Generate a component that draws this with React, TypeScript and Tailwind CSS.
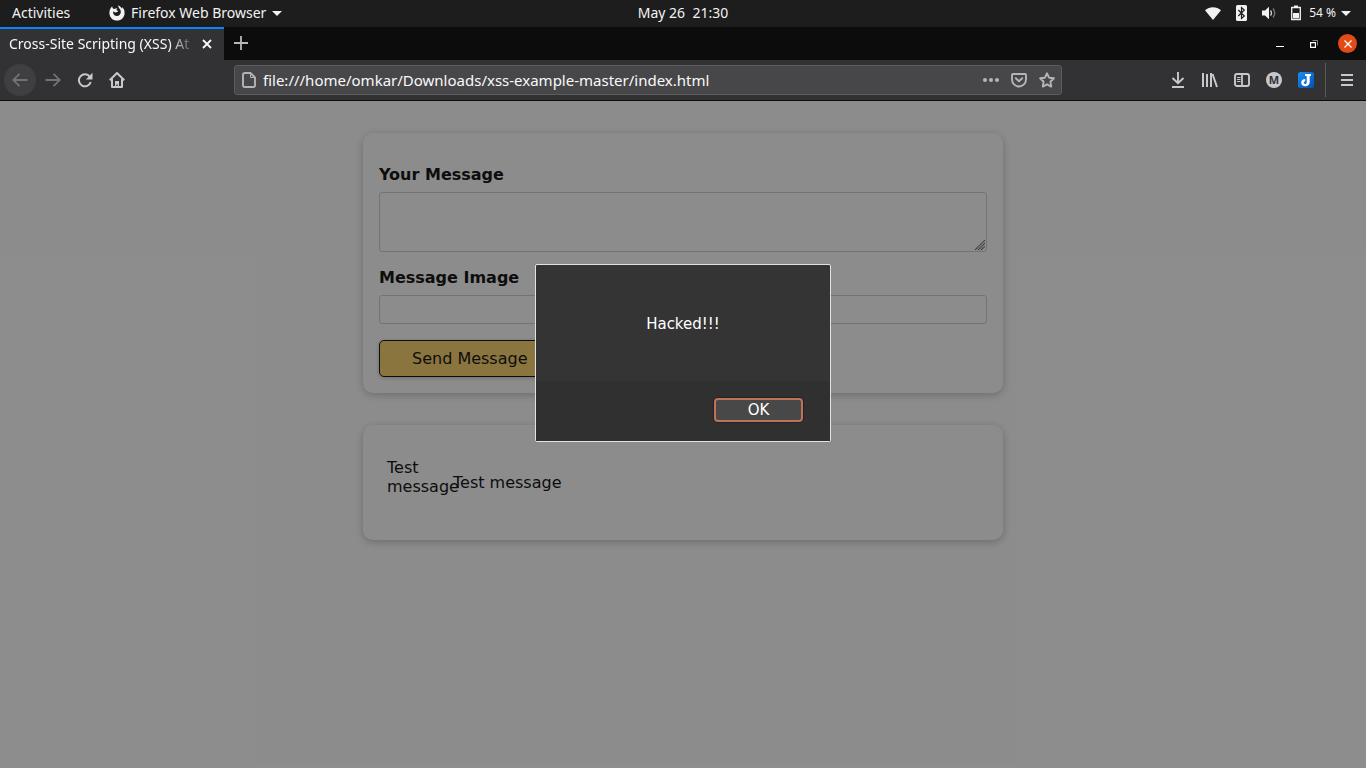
import type { ReactNode } from 'react';

function IconButton({ label, children, className = '' }: { label: string; children: ReactNode; className?: string }) {
  return (
    <button type="button" aria-label={label} className={`flex size-8 shrink-0 items-center justify-center ${className}`}>
      {children}
    </button>
  );
}

function Caret() {
  return (
    <svg width="10" height="5" viewBox="0 0 10 5" aria-hidden="true">
      <path d="M0 0h10L5 5z" fill="#f2f2f2" />
    </svg>
  );
}

function SystemBar() {
  return (
    <header className="grid h-[27px] grid-cols-[1fr_auto_1fr] items-center bg-[#1d1d1d] pb-px text-sm text-[#f2f2f2]">
      <div className="flex items-center pl-3">
        <button type="button" className="w-[97px] text-left">Activities</button>
        <button type="button" className="flex items-center gap-[6px]">
          <svg width="16" height="16" viewBox="0 0 16 16" aria-hidden="true">
            <path
              d="M3.2 1.2C1.300 3 .4 5.300.4 7.900.4 12.200 3.800 15.600 8 15.600s7.600-3.400 7.600-7.700c0-2.500-.9-4.500-2.400-5.900.1.8 0 1.300-.2 1.700C12 1.800 10.500.8 8.600.2c1 1 1.300 1.900 1.200 2.900 1.400 1.100 2 2.400 2 3.900 0 2.300-1.600 4-3.800 4-2.300 0-3.900-1.600-3.900-3.700 0-.4.100-.8.300-1.100.6.8 1.500 1.300 2.400 1.200.9-.1 1.300-.7 2.300-.8-.2-.9-.8-1.500-1.800-1.600.2-.8.6-1.300 1.200-1.800-1.300-.1-2.300.2-3.100.9C3.900 3.700 3.200 2.500 3.200 1.200z"
              fill="#f2f2f2"
            />
          </svg>
          <span>Firefox Web Browser</span>
          <Caret />
        </button>
      </div>
      <time className="whitespace-pre">May 26  21:30</time>
      <div className="flex items-center justify-end pr-[15px]">
        <svg className="mr-3" width="16" height="13" viewBox="0 0 16 13" aria-label="Wi-Fi">
          <path d="M0 3.200C4.500-.8 11.500-.8 16 3.200L8 13z" fill="#f2f2f2" />
        </svg>
        <svg className="mr-3" width="16" height="16" viewBox="0 0 16 16" aria-label="Bluetooth">
          <rect x="3" width="11" height="16" rx="1.500" fill="#f2f2f2" />
          <path d="M5.300 5l6 6L8.500 13.500v-11L11.300 5l-6 6" fill="none" stroke="#1d1d1d" strokeWidth="1.200" />
        </svg>
        <svg className="mr-[13px]" width="16" height="14" viewBox="0 0 16 14" aria-label="Volume">
          <path d="M1 4.500h3L8 .8v12.400L4 9.500H1z" fill="#f2f2f2" />
          <path d="M9.500 4.500q2 2.500 0 5" fill="none" stroke="#d0d0d0" strokeWidth="1.300" />
          <path d="M12 2.500q3.500 4.500 0 9" fill="none" stroke="#777" strokeWidth="1.300" />
        </svg>
        <svg className="mr-[7px]" width="12" height="16" viewBox="0 0 12 16" aria-label="Battery">
          <path d="M1.700 2.500h8.600v12H1.700z" fill="none" stroke="#f2f2f2" strokeWidth="1.300" />
          <path d="M4 .5h4v2H4zM3 8h6v5.200H3z" fill="#f2f2f2" />
        </svg>
        <span className="mr-[5px] text-xs">54 %</span>
        <Caret />
      </div>
    </header>
  );
}

function TabStrip() {
  return (
    <div className="flex h-[33px] items-center bg-[#0c0c0d]">
      <div className="flex h-full w-56 items-center border-t-2 border-[#0a84ff] bg-[#323234] pb-px pl-[9px] text-sm text-[#f9f9fa]">
        <span className="w-[187px] whitespace-nowrap mask-r-from-[160px] mask-r-to-[187px]">
          Cross-Site Scripting (XSS) At
        </span>
        <button type="button" aria-label="Close tab" className="flex size-[22px] items-center justify-center">
          <svg width="10" height="10" viewBox="0 0 10 10"><path d="M1 1l8 8M9 1L1 9" stroke="#f9f9fa" strokeWidth="1.800" /></svg>
        </button>
      </div>
      <IconButton label="New tab" className="ml-px pb-px">
        <svg width="14" height="14" viewBox="0 0 14 14"><path d="M7 0v14M0 7h14" stroke="#b9b9ba" strokeWidth="1.800" /></svg>
      </IconButton>
      <div className="ml-auto flex items-center pr-[9px]">
        <IconButton label="Minimize">
          <svg width="8" height="8" viewBox="0 0 8 8"><path d="M0 6.500h8" stroke="#fff" /></svg>
        </IconButton>
        <IconButton label="Restore" className="ml-[2px]">
          <svg width="8" height="8" viewBox="0 0 8 8">
            <path d="M.6 2.600h4.800v4.800H.6z" fill="none" stroke="#fff" strokeWidth="1.200" />
            <path d="M2.500.5h5v5" fill="none" stroke="#888" />
          </svg>
        </IconButton>
        <button type="button" aria-label="Close window" className="ml-2 flex size-[19px] items-center justify-center rounded-full bg-[#e24a16]">
          <svg width="8" height="8" viewBox="0 0 8 8"><path d="M.5.5l7 7M7.500.5l-7 7" stroke="#fff" strokeWidth="1.200" /></svg>
        </button>
      </div>
    </div>
  );
}

function Toolbar() {
  return (
    <nav className="flex h-[41px] items-center border-b border-[#0c0c0d] bg-[#323234] pl-1">
      <div className="flex w-[230px] shrink-0 items-center">
        <IconButton label="Back" className="mr-px rounded-full bg-[#3f3f41]">
          <svg width="16" height="16" viewBox="0 0 16 16"><path d="M15.500 8H1M7.500 1.800L1.200 8l6.300 6.200" fill="none" stroke="#737374" strokeWidth="1.800" /></svg>
        </IconButton>
        <IconButton label="Forward">
          <svg width="16" height="16" viewBox="0 0 16 16"><path d="M.5 8H15M8.500 1.800L14.800 8l-6.300 6.200" fill="none" stroke="#737374" strokeWidth="1.800" /></svg>
        </IconButton>
        <IconButton label="Reload">
          <svg width="16" height="16" viewBox="0 0 16 16">
            <path d="M12.800 4.800A6 6 0 1 0 13.700 10" fill="none" stroke="#c8c8c9" strokeWidth="2" />
            <path d="M15.500.8v6.700H8.800z" fill="#c8c8c9" />
          </svg>
        </IconButton>
        <IconButton label="Home">
          <svg width="16" height="16" viewBox="0 0 16 16">
            <path d="M.7 8.300L8 1l7.300 7.300M3 7v8h10V7" fill="none" stroke="#c8c8c9" strokeWidth="2" strokeLinejoin="round" />
            <path d="M6 15V9h4v6H8.700v-2.500H7.300V15z" fill="#c8c8c9" />
          </svg>
        </IconButton>
      </div>
      <div className="flex h-[30px] min-w-0 flex-[827] items-center rounded-[3px] border border-[#5b5b5d] bg-[#474749] pl-[6px]">
        <svg className="shrink-0" width="16" height="16" viewBox="0 0 16 16" aria-hidden="true">
          <path d="M3 1h6.500L14 5.500V13.500A1.500 1.500 0 0 1 12.500 15h-9A1.500 1.500 0 0 1 2 13.500V2.500A1.500 1.500 0 0 1 3.500 1z" fill="none" stroke="#b5b5b6" strokeWidth="1.900" />
          <path d="M9.500 1v4.500H14" fill="none" stroke="#b5b5b6" />
        </svg>
        <input
          aria-label="Address"
          readOnly
          value="file:///home/omkar/Downloads/xss-example-master/index.html"
          className="min-w-0 flex-1 bg-transparent pl-[6px] text-[15px] text-[#f9f9fa] outline-none"
        />
        <button type="button" aria-label="Page actions" className="flex w-7 shrink-0 justify-center">
          <svg width="16" height="16" viewBox="0 0 16 16" fill="#b5b5b6"><circle cx="2" cy="8" r="2" /><circle cx="8" cy="8" r="2" /><circle cx="14" cy="8" r="2" /></svg>
        </button>
        <button type="button" aria-label="Save to Pocket" className="flex w-7 shrink-0 justify-center">
          <svg width="16" height="16" viewBox="0 0 16 16" fill="none" stroke="#b5b5b6" strokeWidth="1.900">
            <path d="M2 2h12a1 1 0 0 1 1 1v4.500a7 7 0 0 1-14 0V3a1 1 0 0 1 1-1z" />
            <path d="M4.800 6.200L8 9.300l3.200-3.100" strokeLinecap="round" strokeLinejoin="round" />
          </svg>
        </button>
        <button type="button" aria-label="Bookmark this page" className="flex w-7 shrink-0 justify-center">
          <svg width="16" height="16" viewBox="0 0 16 16">
            <path d="M8 1.300l2.100 4.400 4.800.6-3.500 3.400.8 4.900L8 12.300l-4.200 2.300.8-4.900L1.100 6.300l4.800-.6z" fill="none" stroke="#b5b5b6" strokeWidth="1.900" strokeLinejoin="round" />
          </svg>
        </button>
      </div>
      <div className="flex h-full flex-[304] items-center justify-end pr-[3px]">
        <IconButton label="Downloads">
          <svg width="16" height="16" viewBox="0 0 16 16" fill="none" stroke="#c8c8c9" strokeWidth="1.900"><path d="M8 0v11M2.500 6L8 11.300 13.500 6M2 15h12" /></svg>
        </IconButton>
        <IconButton label="Library">
          <svg width="16" height="16" viewBox="0 0 16 16" fill="none" stroke="#c8c8c9" strokeWidth="2"><path d="M1 1v14M5 2v13M9 1v14M10.500 2l4.500 13" /></svg>
        </IconButton>
        <IconButton label="Sidebars">
          <svg width="16" height="16" viewBox="0 0 16 16" fill="none" stroke="#c8c8c9">
            <rect x="1" y="2" width="14" height="12" rx="2" strokeWidth="1.900" />
            <path d="M8 2v12" strokeWidth="1.800" /><path d="M3 5.500h3.500M3 7.500h3.500M3 9.500h3.500" />
          </svg>
        </IconButton>
        <IconButton label="Account">
          <span className="flex size-4 items-center justify-center rounded-full bg-[#c8c8c9] text-[11px] font-bold text-[#323234]">M</span>
        </IconButton>
        <IconButton label="Joplin Web Clipper">
          <svg width="16" height="16" viewBox="0 0 16 16">
            <defs><linearGradient id="clip" x1="0" y1="0" x2="1" y2="1"><stop stopColor="#1790f4" /><stop offset="1" stopColor="#0350b5" /></linearGradient></defs>
            <rect width="16" height="16" rx="2.500" fill="url(#clip)" />
            <path d="M7 2h6v2h-1.300v6c0 2.600-1.700 4.200-4.300 4.200-2.500 0-4.200-1.500-4.200-3.700s1.700-3.700 4-3.600v2.300c-.9.100-1.400.6-1.400 1.400 0 .9.600 1.400 1.500 1.400s1.400-.6 1.400-1.700V4H7z" fill="#fff" />
          </svg>
        </IconButton>
        <div className="ml-[3px] mr-[5px] h-[34px] w-px bg-[#5b5b5d]" />
        <IconButton label="Menu">
          <svg width="12" height="12" viewBox="0 0 12 12"><path d="M0 1h12M0 6h12M0 11h12" stroke="#c8c8c9" strokeWidth="2" /></svg>
        </IconButton>
      </div>
    </nav>
  );
}

const field = 'block w-full rounded-[3px] border border-[#cccccc]';
const card = 'rounded-[10px] bg-white shadow-[0_2px_8px_rgba(0,0,0,0.26)]';

function MessagePage() {
  return (
    <div className="mx-auto flex w-full max-w-[640px] flex-col gap-8 py-8 font-['DejaVu_Sans',sans-serif] text-base/[19px] text-black">
      <form className={`flex flex-col gap-4 p-4 pt-8 ${card}`}>
        <div>
          <label htmlFor="message" className="mb-2 block font-bold">Your Message</label>
          <div className="relative">
            <textarea id="message" className={`h-[60px] resize-none ${field}`} />
            <svg className="pointer-events-none absolute right-[2px] bottom-[2px]" width="10" height="10" viewBox="0 0 10 10" aria-hidden="true">
              <path d="M0 10L10 0M3 10L10 3M6 10L10 6" stroke="#555" strokeWidth="1.200" strokeDasharray="1.400 .4" />
            </svg>
          </div>
        </div>
        <div>
          <label htmlFor="image" className="mb-2 block font-bold">Message Image</label>
          <input id="image" type="text" className={`h-[29px] ${field}`} />
        </div>
        <button type="button" className="self-start rounded-[5px] border border-black bg-[#fad062] px-8 py-2 shadow-[0_1px_4px_rgba(0,0,0,0.26)]">
          Send Message
        </button>
      </form>
      <ul className={`px-6 pt-[33px] pb-8 ${card}`}>
        <li className="flex items-center gap-4">
          <div className="h-[50px] w-[50px]">Test message</div>
          <p className="pb-px">Test message</p>
        </li>
      </ul>
    </div>
  );
}

function AlertDialog() {
  return (
    <div className="absolute inset-0 flex items-start justify-center bg-[#1a1a1a]/50 pt-[163px] font-['DejaVu_Sans',sans-serif] text-[15px] text-white">
      <div role="alertdialog" aria-labelledby="alert-text" className="w-[296px] rounded-[2px] border border-[#e2e2e2] bg-[#343434]">
        <p id="alert-text" className="flex h-[116px] items-center justify-center pt-[2px]">Hacked!!!</p>
        <div className="flex h-[60px] items-center justify-end bg-[#303030] pr-[27px] pb-[2px]">
          <button type="button" className="h-6 w-[89px] rounded-[4px] border-2 border-[#bd7259] bg-[#484848] leading-5 ring-1 ring-[#232323]">
            OK
          </button>
        </div>
      </div>
    </div>
  );
}

export default function App() {
  return (
    <div className="flex min-h-screen flex-col font-['Noto_Sans','Open_Sans',sans-serif]">
      <SystemBar />
      <TabStrip />
      <Toolbar />
      <main className="relative flex-1 bg-white">
        <MessagePage />
        <AlertDialog />
      </main>
    </div>
  );
}
